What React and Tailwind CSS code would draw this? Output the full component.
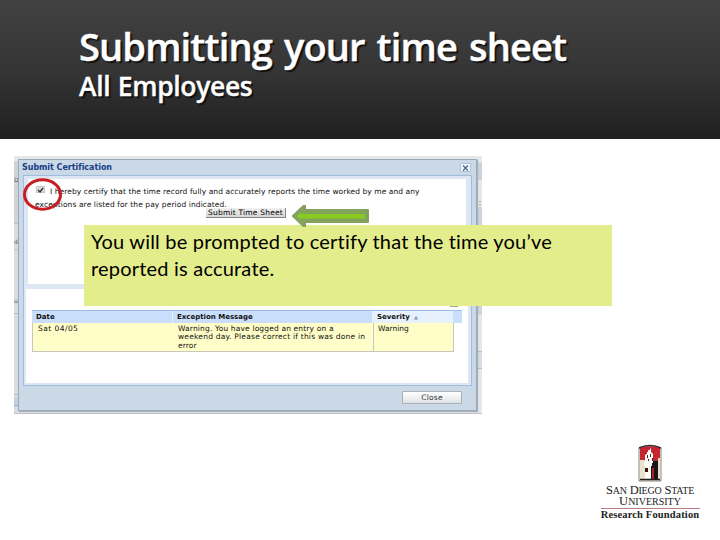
const COLUMNS = [
  { label: 'Date', width: 'w-[141px]', bg: 'bg-[#c9defa]' },
  { label: 'Exception Message', width: 'w-[200px]', bg: 'bg-[#c9defa]' },
  { label: 'Severity', width: 'w-[80px]', bg: 'bg-[#e6f1fd]', sorted: true },
];

const MESSAGE_LINES = [
  { text: 'Warning. You have logged an entry on a', tracking: 'tracking-[0.15px]' },
  { text: 'weekend day. Please correct if this was done in', tracking: 'tracking-[0.22px]' },
  { text: 'error', tracking: 'tracking-[0.1px]' },
];

function SlideHeader() {
  return (
    <header className="h-[139px] pl-[79px] pt-[23px] bg-gradient-to-b from-[#424242] via-[#353535] to-[#202020] font-['Trebuchet_MS','Open_Sans',sans-serif] font-semibold text-white whitespace-nowrap [text-shadow:2px_2px_1px_#111]">
      <h1 className="text-[38px] leading-[46px] tracking-[-0.85px] [word-spacing:3px] [-webkit-text-stroke:0.4px_white]">Submitting your time sheet</h1>
      <p className="text-[26.5px] leading-[35px] tracking-[-0.35px] [word-spacing:1px] [-webkit-text-stroke:0.3px_white]">All Employees</p>
    </header>
  );
}

function Certification() {
  return (
    <div className="h-[105px] ml-1 mr-[5px] bg-white pt-[6px] pl-[7px] text-[7.5px] leading-[13px] text-[#111] whitespace-nowrap">
      <div className="flex items-center pl-px">
        <span className="w-[9px] h-[7px] -mt-1 bg-[#d9dbdd] border border-[#c5c8ca] flex items-center justify-center">
          <svg className="w-[7px] h-[6px]" viewBox="0 0 7 6" fill="none" stroke="#333" strokeWidth="1.4">
            <path d="M1 3l2 2 3-4" />
          </svg>
        </span>
        <span className="ml-[5px] tracking-[0.07px]">
          I hereby certify that the time record fully and accurately reports the time worked by me and any
        </span>
      </div>
      <p className="tracking-[0.09px]">exceptions are listed for the pay period indicated.</p>
      <button className="block ml-[171px] -mt-[3px] w-[80px] h-[10px] bg-gradient-to-b from-[#f1f1f1] to-[#d5d5d5] border-r border-b border-[#888] text-[7.5px] leading-[10px] tracking-[0.2px] text-black">
        Submit Time Sheet
      </button>
    </div>
  );
}

function ExceptionTable() {
  return (
    <div className="text-[7.5px] text-[#111] whitespace-nowrap">
      <div className="flex w-[430px] h-[13px] bg-[#c9defa] border-t border-[#9cbce0] text-[7px] font-bold leading-[13px]">
        {COLUMNS.map((col) => (
          <div key={col.label} className={`${col.width} ${col.bg} pl-1 border-r border-[#e8f1fc]`}>
            {col.label}
            {col.sorted && <span className="ml-1 text-[5px] text-[#8196b0]">▲</span>}
          </div>
        ))}
      </div>
      <div className="flex w-[422px] h-[29px] bg-[#fffec9] border border-t-0 border-[#c7c9bb] leading-[8.3px] pt-[2px]">
        <div className="w-[141px] pl-[5px] tracking-[0.45px]">Sat 04/05</div>
        <div className="w-[199px] pl-1">
          {MESSAGE_LINES.map((line) => (
            <p key={line.text} className={line.tracking}>{line.text}</p>
          ))}
        </div>
        <div className="-mt-[2px] pt-[2px] pl-1 border-l border-[#c2c7cc]">Warning</div>
      </div>
    </div>
  );
}

function Dialog() {
  return (
    <div className="w-[459px] h-[252px] ml-1 bg-[#cbd8e6] border border-[#9aaabd] font-['DejaVu_Sans',Verdana,sans-serif] shadow-[1px_1px_1px_#a8b1ba]">
      <div className="h-[15px] pl-[3px] pr-[5px] flex items-center justify-between">
        <h2 className="text-[8px] leading-[15px] font-bold tracking-[-0.04px] text-[#173f85] whitespace-nowrap">Submit Certification</h2>
        <button className="w-[11px] h-[9px] bg-[#f3f8ff] border border-[#a8c2e0] rounded-[1px] flex items-center justify-center">
          <svg className="w-[7px] h-[6px]" viewBox="0 0 7 6" stroke="#49617f" strokeWidth="1.2">
            <path d="M1 .5l5 5M6 .5l-5 5" />
          </svg>
        </button>
      </div>
      <div className="ml-1 w-[449px] h-[211px] bg-[#dde7f4] border border-[#9ebddf] pt-[3px]">
        <Certification />
        <div className="relative mt-[5px] ml-[2px] mr-[3px] h-[94px] bg-white pt-[21px] pl-[6px]">
          <span className="absolute top-[17px] right-[10px] w-2 h-px bg-[#a3a59c]" />
          <ExceptionTable />
        </div>
      </div>
      <div className="flex justify-end pt-[5px] pr-[14px]">
        <button className="w-[60px] h-[13px] bg-gradient-to-b from-white to-[#dfe2e5] border border-[#a9b2bb] rounded-[1px] text-[7.5px] leading-[11px] tracking-[0.2px] text-[#333]">
          Close
        </button>
      </div>
    </div>
  );
}

// Time sheet page that shows through at the edges of the dialog
function TimesheetWindow() {
  return (
    <div className="relative w-[468px] h-[258px] ml-[14px] mt-[17px] pt-[3px] bg-[#e6e7e8] border-b border-[#bfc3c7]">
      <div className="absolute inset-y-0 left-0 w-1 overflow-hidden flex flex-col bg-[#d9dcdf] font-['DejaVu_Sans',sans-serif] text-[6px] leading-[8px] text-[#555]">
        <span className="h-[67px] pt-[15px] bg-[#ced3d9] border-t-[5px] border-[#e6e7e8]">D</span>
        <span className="h-[27px] pt-[14px] border-t border-b border-[#b5c3cf]">d</span>
        <span className="h-[55px] pt-[47px]">u</span>
        <span className="h-[82px] mt-2 border-y border-[#aebfd0]" />
        <span className="h-[8px] mt-[3px] bg-[#c2ceda] border-b border-[#98aec6]" />
      </div>
      <div className="absolute top-0 right-0 w-[5px] h-[257px] flex flex-col">
        <span className="h-[7px] bg-[#e6e7e8]" />
        <span className="h-[17px] bg-[#cad4df]" />
        <span className="h-[28px] border-b border-[#ccd2d7] text-[7px] leading-[45px] pl-[2px] text-[#555]">:</span>
        <span className="h-[50px] bg-[#cdd4db]" />
        <span className="h-[12px] mt-[45px] bg-[#cdd4db]" />
        <span className="h-[18px] mt-[36px] bg-[#d5dce3] border-y border-[#a9bfd4]" />
      </div>
      <div className="relative">
        <Dialog />
      </div>
      <svg className="absolute left-[8px] top-[21px] w-[42px] h-[35px]" viewBox="0 0 42 35" fill="none">
        <ellipse cx="20.5" cy="17.5" rx="18" ry="14.7" stroke="#c91d22" strokeWidth="3" />
      </svg>
    </div>
  );
}

function Callout() {
  return (
    <div className="absolute left-[84px] top-[225px] w-[528px] h-[81px] pl-[7px] pt-[3px] bg-[#e4ed8c] font-['Lato',sans-serif] text-[20px] leading-[27px] text-black whitespace-nowrap">
      <p className="tracking-[0.2px]">You will be prompted to certify that the time you’ve</p>
      <p className="tracking-[0.2px]">reported is accurate.</p>
    </div>
  );
}

function Arrow() {
  return (
    <svg className="absolute left-[291px] top-[204px] w-[79px] h-[24px]" viewBox="0 0 79 24">
      <path d="M1 11.5L12 1h3v4h62q1 0 1 1v12q0 1-1 1H15v4h-3L1 12.5z" fill="#83a35c" />
      <path d="M6 11.8L10 8.5v1.5h64v4.5H10V16L6 12.5z" fill="#8acb22" />
    </svg>
  );
}

function Logo() {
  return (
    <div className="absolute left-[600px] top-[444px] w-[100px] flex flex-col items-center font-['Liberation_Serif',serif] text-[#222] whitespace-nowrap">
      <svg className="w-[24px] h-[38px]" viewBox="0 0 24 38">
        <path d="M1 37V4Q12-1 23 4v33z" fill="#faf6e9" stroke="#5b5349" strokeWidth=".7" />
        <path d="M2 18V4Q12 .5 22 4v14z" fill="#c62634" />
        <path d="M1 4Q12-1 23 4" fill="none" stroke="#382424" strokeWidth="1.5" />
        <path d="M2 16h5v20H2z" fill="#ebe2cd" />
        <path d="M13 17h8v19h-8z" fill="#19151a" />
        <path d="M20 14h2v22h-2z" fill="#e6dcc4" />
        <path d="M7 24h3v4H7z" fill="#2a1a1d" />
        <path d="M14 24h2v11h-2z" fill="#a5212f" />
        <path d="M7 19v-8l2-1V8h1V6h2V4.500h1V8l2 2v9z" fill="#fffdf7" />
        <path d="M6 18h8v4H6zM7 28h5v7H7z" fill="#fffdf7" />
        <path d="M9 11h1v3H9zm3-1h1v3h-1zm2 4h1v3h-1zm-4 1h1v2h-1z" fill="#33272a" />
        <path d="M2 35.500h20" stroke="#221c1c" strokeWidth="1.5" />
      </svg>
      <p className="mt-[3px] text-[12.5px] leading-[11px] tracking-[-0.2px]">
        S<span className="text-[10px]">AN</span> D<span className="text-[10px]">IEGO</span> S<span className="text-[10px]">TATE</span>
      </p>
      <p className="text-[12.5px] leading-[10px]">
        U<span className="text-[10px]">NIVERSITY</span>
      </p>
      <div className="w-[99px] mt-px border-t border-[#bd7d83]" />
      <p className="text-[10.5px] leading-[12px] font-bold tracking-[0.15px]">Research Foundation</p>
    </div>
  );
}

export default function App() {
  return (
    <main className="relative w-[720px] h-[540px] overflow-hidden bg-white">
      <SlideHeader />
      <TimesheetWindow />
      <Callout />
      <Arrow />
      <Logo />
    </main>
  );
}
